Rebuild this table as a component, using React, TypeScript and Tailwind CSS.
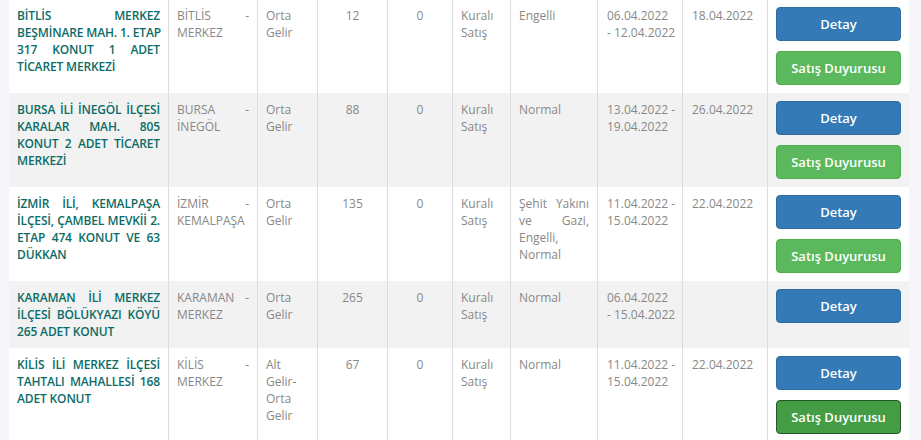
import React from "react";

type Row = {
  name: string[];
  loc: string;
  income: string;
  count: string;
  zero: string;
  type: string;
  group: string;
  dates: string[];
  draw: string;
  sale: boolean;
  active?: boolean;
  striped: boolean;
};

const rows: Row[] = [
  {
    name: ["BİTLİS MERKEZ", "BEŞMİNARE MAH. 1. ETAP", "317 KONUT 1 ADET", "TİCARET MERKEZİ"],
    loc: "BİTLİS - MERKEZ",
    income: "Orta Gelir",
    count: "12",
    zero: "0",
    type: "Kuralı Satış",
    group: "Engelli",
    dates: ["06.04.2022", "- 12.04.2022"],
    draw: "18.04.2022",
    sale: true,
    striped: false,
  },
  {
    name: ["BURSA İLİ İNEGÖL İLÇESİ", "KARALAR MAH. 805", "KONUT 2 ADET TİCARET", "MERKEZİ"],
    loc: "BURSA - İNEGÖL",
    income: "Orta Gelir",
    count: "88",
    zero: "0",
    type: "Kuralı Satış",
    group: "Normal",
    dates: ["13.04.2022 -", "19.04.2022"],
    draw: "26.04.2022",
    sale: true,
    striped: true,
  },
  {
    name: ["İZMİR İLİ, KEMALPAŞA", "İLÇESİ, ÇAMBEL MEVKİİ 2.", "ETAP 474 KONUT VE 63", "DÜKKAN"],
    loc: "İZMİR - KEMALPAŞA",
    income: "Orta Gelir",
    count: "135",
    zero: "0",
    type: "Kuralı Satış",
    group: "Şehit Yakını ve Gazi, Engelli, Normal",
    dates: ["11.04.2022 -", "15.04.2022"],
    draw: "22.04.2022",
    sale: true,
    striped: false,
  },
  {
    name: ["KARAMAN İLİ MERKEZ", "İLÇESİ BÖLÜKYAZI KÖYÜ", "265 ADET KONUT"],
    loc: "KARAMAN - MERKEZ",
    income: "Orta Gelir",
    count: "265",
    zero: "0",
    type: "Kuralı Satış",
    group: "Normal",
    dates: ["06.04.2022", "- 15.04.2022"],
    draw: "",
    sale: false,
    striped: true,
  },
  {
    name: ["KİLİS İLİ MERKEZ İLÇESİ", "TAHTALI MAHALLESİ 168", "ADET KONUT"],
    loc: "KİLİS - MERKEZ",
    income: "Alt Gelir-Orta Gelir",
    count: "67",
    zero: "0",
    type: "Kuralı Satış",
    group: "Normal",
    dates: ["11.04.2022 -", "15.04.2022"],
    draw: "22.04.2022",
    sale: true,
    active: true,
    striped: false,
  },
];

const cell = "border-l border-[#dddddd] px-2 pt-2 pb-2 text-justify";

function Lines({ lines }: { lines: string[] }) {
  return (
    <>
      {lines.map((l, k) => (
        <span
          key={k}
          className={`block whitespace-nowrap ${
            k < lines.length - 1 ? "text-justify [text-align-last:justify]" : "text-left"
          }`}
        >
          {l}
        </span>
      ))}
    </>
  );
}

export default function App() {
  return (
    <div
      className="min-h-[440px] w-[921px] overflow-hidden bg-[#f4f6f9] pl-[9px] text-[12px] leading-[17px] text-[#888888]"
      style={{ fontFamily: '"Open Sans", "Liberation Sans", sans-serif' }}
    >
      <div className="-mt-px w-[900px] bg-white">
        {rows.map((r, i) => (
          <div
            key={i}
            className={`grid grid-cols-[159px_89px_60px_70px_65px_58px_87px_85px_85px_142px] ${
              r.striped ? "bg-[#f2f2f2]" : "bg-white"
            }`}
          >
            <div className="px-2 pt-2 pb-2 font-semibold tracking-[-0.15px] text-[#0b6c67]">
              <Lines lines={r.name} />
            </div>
            <div className={cell}>{r.loc}</div>
            <div className={cell}>{r.income}</div>
            <div className={`${cell} !text-center`}>{r.count}</div>
            <div className={`${cell} !text-center`}>{r.zero}</div>
            <div className={cell}>{r.type}</div>
            <div className={cell}>{r.group}</div>
            <div className={`${cell} pl-[9px]`}>
              <Lines lines={r.dates} />
            </div>
            <div className={`${cell} pl-[9px]`}>{r.draw}</div>
            <div className="flex flex-col gap-[10px] border-l border-[#dddddd] px-2 pt-2 pb-2">
              <button className="h-[34px] w-full rounded-[4px] border border-[#2e6da4] bg-[#337ab7] text-[13px] font-semibold text-white">
                Detay
              </button>
              {r.sale && (
                <button
                  className={`h-[34px] w-full rounded-[4px] border text-[13px] font-semibold text-white ${
                    r.active ? "border-[#255625] bg-[#449d44]" : "border-[#4cae4c] bg-[#5cb85c]"
                  }`}
                >
                  Satış Duyurusu
                </button>
              )}
            </div>
          </div>
        ))}
      </div>
    </div>
  );
}
